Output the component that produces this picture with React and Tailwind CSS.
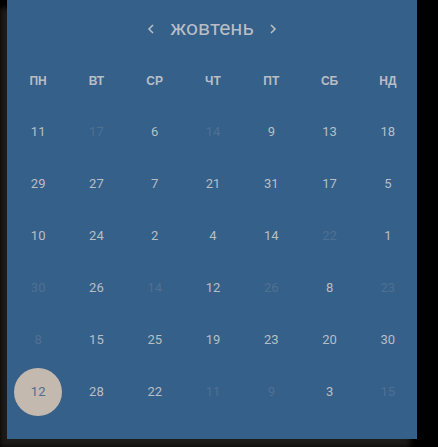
import React from 'react';

const weekdays = ['ПН', 'ВТ', 'СР', 'ЧТ', 'ПТ', 'СБ', 'НД'];

// [day, dim, selected]
const weeks = [
  [[11], [17, 1], [6], [14, 1], [9], [13], [18]],
  [[29], [27], [7], [21], [31], [17], [5]],
  [[10], [24], [2], [4], [14], [22, 1], [1]],
  [[30, 1], [26], [14, 1], [12], [26, 1], [8], [23, 1]],
  [[8, 1], [15], [25], [19], [23], [20], [30]],
  [[12, 0, 1], [28], [22], [11, 1], [9, 1], [3], [15, 1]],
];

function Chevron({ dir }) {
  return (
    <svg width="10" height="12" viewBox="0 0 10 12" fill="none" stroke="#b9bec4" strokeWidth="1.6">
      {dir === 'left' ? <path d="M7 2 L3 6 L7 10" /> : <path d="M3 2 L7 6 L3 10" />}
    </svg>
  );
}

export default function App() {
  return (
    <div className="w-[438px] h-[447px] bg-black overflow-hidden" style={{ fontFamily: 'Roboto, "Liberation Sans", sans-serif' }}>
      <div className="ml-[7px] w-[410px] h-[439px] bg-[#35608a] shadow-[-7px_8px_5px_#1d1b19]">
        <div className="h-[54px] pt-[4px] flex items-center justify-center gap-[14px] text-[#b9bec4]">
          <Chevron dir="left" />
          <span className="text-[21px] leading-none pb-[2px]">жовтень</span>
          <Chevron dir="right" />
        </div>

        <div className="grid grid-cols-7 h-[52px] pl-[2px] pt-[2px] items-center">
          {weekdays.map((d) => (
            <div key={d} className="text-center text-[12px] font-bold text-[#b9bec4]" style={{ fontFamily: '"Liberation Sans", Arial, sans-serif' }}>{d}</div>
          ))}
        </div>

        {weeks.map((week, i) => (
          <div key={i} className="grid grid-cols-7 h-[52px] pl-[2px] items-center">
            {week.map(([day, dim, selected], j) => (
              <div key={j} className="flex justify-center">
                {selected ? (
                  <div className="w-[48px] h-[48px] rounded-full bg-[#c4b9af] flex items-center justify-center text-[13px] text-[#4e6e8e]">
                    {day}
                  </div>
                ) : (
                  <span className={'text-[13px] ' + (dim ? 'text-[#4f7092]' : 'text-[#b9bec4]')}>{day}</span>
                )}
              </div>
            ))}
          </div>
        ))}
      </div>
    </div>
  );
}
